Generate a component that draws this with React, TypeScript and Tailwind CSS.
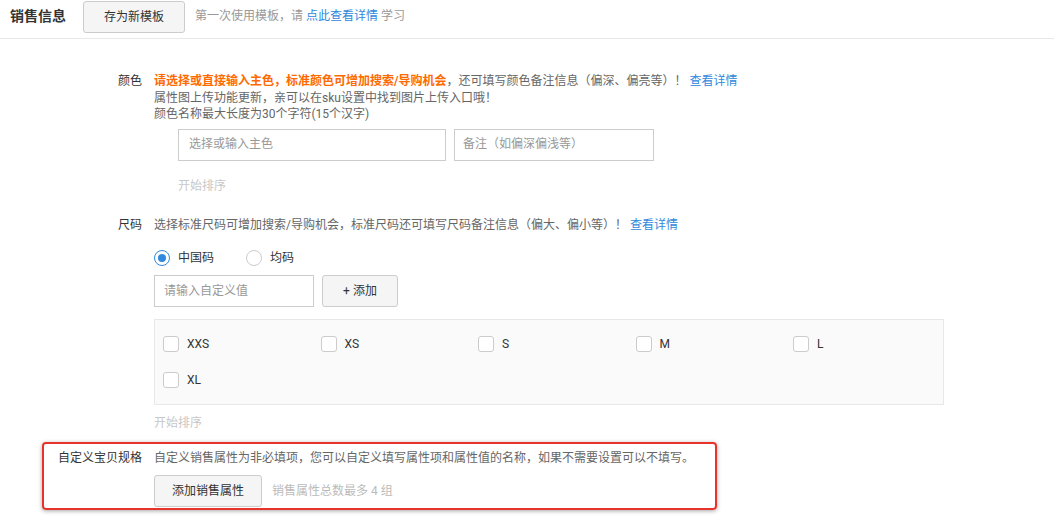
import React from 'react';

const sizes = ['XXS', 'XS', 'S', 'M', 'L', 'XL'];

function Radio({ checked, label }: { checked?: boolean; label: string }) {
  return (
    <label className="flex items-center gap-2">
      <span
        className={`w-4 h-4 rounded-full border flex items-center justify-center bg-white ${
          checked ? 'border-[#3089dc]' : 'border-[#ccc]'
        }`}
      >
        {checked && <span className="w-2 h-2 rounded-full bg-[#3089dc]" />}
      </span>
      <span className="text-[#333]">{label}</span>
    </label>
  );
}

export default function App() {
  return (
    <div className="w-[1054px] h-[517px] overflow-hidden bg-white text-[12px] leading-[16.5px] text-[#666] font-['Roboto','Noto_Sans_CJK_SC',sans-serif]">
      {/* header */}
      <div className="h-[39px] border-b border-[#e8e8e8] flex items-start pl-[10px]">
        <div className="mt-[6px] text-[14px] font-bold text-[#333] leading-[20px]">销售信息</div>
        <button className="ml-[17px] mt-px w-[102px] h-[32px] bg-[#f5f5f5] border border-[#ccc] rounded-[3px] text-[#333]">
          存为新模板
        </button>
        <div className="ml-[10px] mt-[8px] text-[#999]">
          第一次使用模板，请 <span className="text-[#3089dc]">点此查看详情</span> 学习
        </div>
      </div>

      {/* color */}
      <div className="flex mt-[34px]">
        <div className="w-[142px] text-right text-[#333]">颜色</div>
        <div className="ml-[12px]">
          <div>
            <span className="text-[#ff6a00] font-bold">请选择或直接输入主色，标准颜色可增加搜索/导购机会</span>
            ，还可填写颜色备注信息（偏深、偏亮等）！ <span className="text-[#3089dc]">查看详情</span>
          </div>
          <div>属性图上传功能更新，亲可以在sku设置中找到图片上传入口哦！</div>
          <div>颜色名称最大长度为30个字符(15个汉字)</div>
          <div className="flex gap-2 ml-[24px] mt-[6px]">
            <div className="w-[268px] h-[32px] border border-[#ccc] flex items-center px-[10px] text-[#999]">
              选择或输入主色
            </div>
            <div className="w-[200px] h-[32px] border border-[#ccc] flex items-center px-[8px] text-[#999]">
              备注（如偏深偏浅等）
            </div>
          </div>
          <div className="ml-[24px] mt-[17px] text-[#c8c8c8]">开始排序</div>
        </div>
      </div>

      {/* size */}
      <div className="flex mt-[23px]">
        <div className="w-[142px] text-right text-[#333]">尺码</div>
        <div className="ml-[12px]">
          <div>
            选择标准尺码可增加搜索/导购机会，标准尺码还可填写尺码备注信息（偏大、偏小等）！{' '}
            <span className="text-[#3089dc]">查看详情</span>
          </div>
          <div className="flex gap-[32px] mt-[16px]">
            <Radio checked label="中国码" />
            <Radio label="均码" />
          </div>
          <div className="flex gap-2 mt-[9px]">
            <div className="w-[160px] h-[32px] border border-[#ccc] flex items-center px-[9px] text-[#999]">
              请输入自定义值
            </div>
            <button className="w-[76px] h-[32px] bg-[#f5f5f5] border border-[#ccc] rounded-[3px] text-[#333]">
              + 添加
            </button>
          </div>
          <div className="w-[790px] mt-[12px] border border-[#e8e8e8] bg-[#fafafa] pl-[8px] pt-[6px] pb-[6px] grid grid-cols-[repeat(5,157.5px)] overflow-hidden">
            {sizes.map((s) => (
              <div key={s} className="h-[36px] flex items-center gap-2">
                <span className="w-4 h-4 rounded-[3px] border border-[#ccc] bg-white" />
                <span className="text-[#333]">{s}</span>
              </div>
            ))}
          </div>
          <div className="mt-[10px] text-[#c8c8c8]">开始排序</div>
        </div>
      </div>

      {/* custom spec, highlighted */}
      <div className="ml-[42px] mt-[10px] w-[675px] border-2 border-[#e8332a] rounded-[4px] shadow-[0_1px_4px_rgba(0,0,0,0.35)] pt-[6px] pb-px">
        <div className="flex">
          <div className="w-[98px] text-right text-[#333]">自定义宝贝规格</div>
          <div className="ml-[12px]">
            <div>自定义销售属性为非必填项，您可以自定义填写属性项和属性值的名称，如果不需要设置可以不填写。</div>
            <div className="flex items-center mt-[9px]">
              <button className="w-[108px] h-[32px] bg-[#f5f5f5] border border-[#ccc] rounded-[3px] text-[#333]">
                添加销售属性
              </button>
              <span className="ml-[10px] text-[#bbb]">销售属性总数最多 4 组</span>
            </div>
          </div>
        </div>
      </div>
    </div>
  );
}
